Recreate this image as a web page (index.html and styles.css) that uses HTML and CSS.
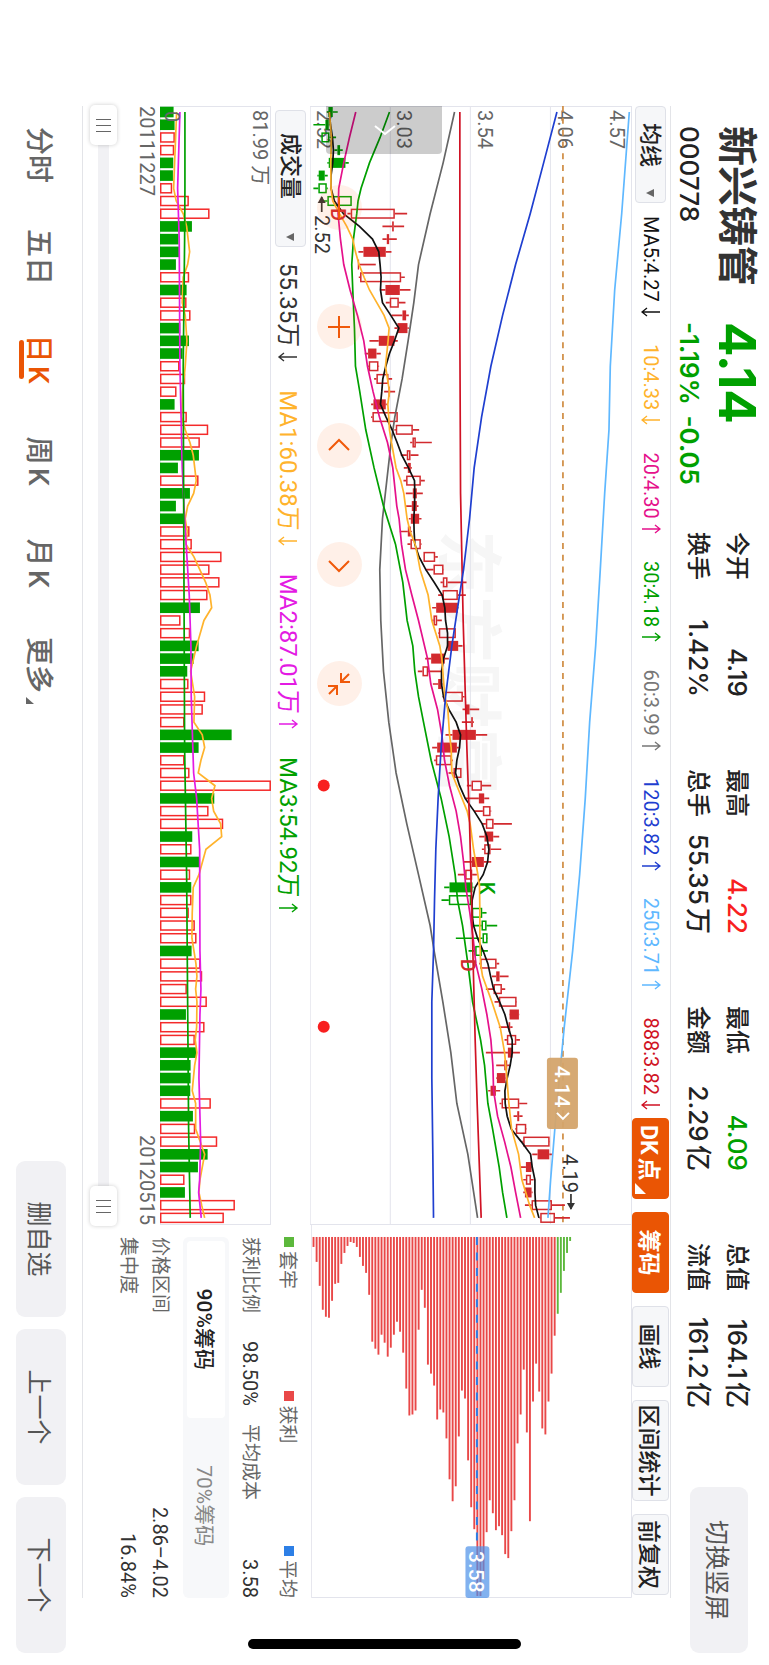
FILE: index.html
```html
<!DOCTYPE html>
<html lang="zh-CN">
<head>
    <meta charset="UTF-8">
    <meta name="viewport" content="width=device-width, initial-scale=1.0">
    <title>新兴铸管 000778</title>
    <link rel="stylesheet" href="styles.css">
</head>
<body>
  <div class="screen">
  <div class="app">

    <header class="header">
      <div class="quote">
        <h1 class="name">新兴铸管</h1>
        <span class="price">4.14</span>
        <span class="code">000778</span>
        <span class="change">-1.19% <span>-0.05</span></span>
      </div>
      <div class="stats">
        <dl>
          <dt>今开</dt><dd>4.19</dd>
          <dt>换手</dt><dd>1.42%</dd>
        </dl>
        <dl>
          <dt>最高</dt><dd class="up">4.22</dd>
          <dt>总手</dt><dd>55.35万</dd>
        </dl>
        <dl>
          <dt>最低</dt><dd class="down">4.09</dd>
          <dt>金额</dt><dd>2.29亿</dd>
        </dl>
        <dl>
          <dt>总值</dt><dd>164.1亿</dd>
          <dt>流值</dt><dd>161.2亿</dd>
        </dl>
      </div>
      <button class="btn switch" type="button">切换竖屏</button>
    </header>

    <main class="panel">
      <div class="toolbar">
        <span class="picker">
          <select aria-label="主图指标"><option>均线</option></select>
        </span>
        <div class="mas">
          <span class="c-black">MA5:4.27<svg class="arrow"><use href="#down"/></svg></span>
          <span class="c-yellow">10:4.33<svg class="arrow"><use href="#down"/></svg></span>
          <span class="c-pink">20:4.30<svg class="arrow"><use href="#up"/></svg></span>
          <span class="c-green">30:4.18<svg class="arrow"><use href="#up"/></svg></span>
          <span class="c-gray">60:3.99<svg class="arrow"><use href="#up"/></svg></span>
          <span class="c-blue">120:3.82<svg class="arrow"><use href="#up"/></svg></span>
          <span class="c-sky">250:3.71<svg class="arrow"><use href="#up"/></svg></span>
          <span class="c-red">888:3.82<svg class="arrow"><use href="#down"/></svg></span>
        </div>
        <div class="tools">
          <button class="tool on more" type="button">DK点</button>
          <button class="tool on" type="button">筹码</button>
          <button class="tool" type="button">画线</button>
          <button class="tool wide" type="button">区间统计</button>
          <button class="tool" type="button">前复权</button>
        </div>
      </div>

      <div class="kline">
        <svg id="kline" viewBox="0 0 1118 322"></svg>
        <button class="drawer" type="button" aria-label="展开">
          <svg viewBox="0 0 12 24"><path d="M2 2 L10 12 L2 22"/></svg>
        </button>
        <div class="zoom">
          <button type="button" aria-label="缩小"><svg viewBox="0 0 24 24"><path d="M1 12H23"/></svg></button>
          <button type="button" aria-label="放大"><svg viewBox="0 0 24 24"><path d="M1 12H23M12 1V23"/></svg></button>
          <button type="button" aria-label="左移"><svg viewBox="0 0 24 24"><path d="M16 2L6 12L16 22"/></svg></button>
          <button type="button" aria-label="右移"><svg viewBox="0 0 24 24"><path d="M8 2L18 12L8 22"/></svg></button>
          <button type="button" aria-label="收起"><svg viewBox="0 0 24 24"><path d="M1 10H10V1M10 10L2 2M23 14H14V23M14 14L22 22"/></svg></button>
        </div>
      </div>
      <div class="chips"><svg id="chips" viewBox="0 0 374 322"></svg></div>

      <div class="left">
        <div class="volbar">
          <span class="picker picker-vol">
            <select aria-label="副图指标"><option>成交量</option></select>
          </span>
          <span class="c-dark">55.35万<svg class="arrow big"><use href="#down"/></svg></span>
          <span class="c-yellow">MA1:60.38万<svg class="arrow big"><use href="#down"/></svg></span>
          <span class="c-violet">MA2:87.01万<svg class="arrow big"><use href="#up"/></svg></span>
          <span class="c-green">MA3:54.92万<svg class="arrow big"><use href="#up"/></svg></span>
        </div>
        <svg id="volume" class="volume" viewBox="0 0 1118 111"></svg>
        <div class="dates"><span>20111227</span><span>20120515</span></div>
        <div class="range">
          <input type="range" min="0" max="100" value="0" aria-label="开始日期">
          <input type="range" min="0" max="100" value="100" aria-label="结束日期">
        </div>
      </div>

      <div class="info">
        <div class="legend">
          <span class="k-green">套牢</span>
          <span class="k-red">获利</span>
          <span class="k-blue">平均</span>
        </div>
        <div class="line four">
          <span>获利比例</span><b>98.50%</b><span>平均成本</span><b>3.58</b>
        </div>
        <div class="seg">
          <button class="on" type="button">90%筹码</button>
          <button type="button">70%筹码</button>
        </div>
        <div class="line"><span>价格区间</span><b>2.86–4.02</b></div>
        <div class="line"><span>集中度</span><b>16.84%</b></div>
      </div>
    </main>

    <footer class="footer">
      <nav class="tabs">
        <button type="button">分时</button>
        <button type="button">五日</button>
        <button class="active" type="button">日K</button>
        <button type="button">周K</button>
        <button type="button">月K</button>
        <button class="dropdown" type="button">更多</button>
      </nav>
      <div class="actions">
        <button class="btn" type="button">删自选</button>
        <button class="btn" type="button">上一个</button>
        <button class="btn" type="button">下一个</button>
      </div>
    </footer>

    <div class="home"></div>
  </div>
  </div>

  <svg class="defs">
    <symbol id="down" viewBox="0 0 10 20"><path d="M5 1V19M1 14L5 19L9 14"/></symbol>
    <symbol id="up" viewBox="0 0 10 20"><path d="M5 19V1M1 6L5 1L9 6"/></symbol>
  </svg>

  <script src="chart.js"></script>
</body>
</html>
```

FILE: styles.css
```css
*{
  box-sizing: border-box;
}
body{
  margin: 0;
  background: #fff;
}
h1, dl, dd{
  margin: 0;
}
button, select, input{
  font-family: inherit;
  margin: 0;
  padding: 0;
  border: none;
  background: none;
}

/* 橫屏 */
.screen{
  position: relative;
  width: 100%;
  height: 100vh;
  overflow: hidden;
}
.app{
  position: absolute;
  left: 0;
  top: 0;
  width: 100vh;
  height: 100vw;
  display: flex;
  flex-direction: column;
  transform-origin: 0 0;
  transform: translateX(100vw) rotate(90deg);
  font-family: Roboto, "Noto Sans CJK SC", sans-serif;
  color: #222;
}
.defs{
  position: absolute;
  width: 0;
  height: 0;
}

.c-black{ color: #111; }
.c-dark{ color: #333; }
.c-yellow{ color: #ffb32c; }
.c-pink{ color: #e5118b; }
.c-green{ color: #00a000; }
.c-gray{ color: #777; }
.c-blue{ color: #1f3fd0; }
.c-sky{ color: #5fb8ff; }
.c-red{ color: #d01224; }
.c-violet{ color: #e31be3; }

.btn{
  width: 156px;
  height: 50px;
  border-radius: 9px;
  background: #f1f1f4;
  color: #555;
  font-size: 25px;
}

/* 頭部 */
.header{
  height: 98px;
  display: flex;
  align-items: flex-start;
  font-family: Inter, "Noto Sans CJK SC", sans-serif;
  text-autospace: normal;
}
.quote{
  width: 532px;
  padding: 8px 0 0 126px;
  display: grid;
  grid-template-columns: 196px 1fr;
  grid-template-rows: 48px 46px;
  line-height: 48px;
  white-space: nowrap;
}
.name{
  font-size: 40px;
  font-weight: 600;
  color: #333;
}
.price{
  font-size: 51px;
  font-weight: 700;
  color: #00a000;
}
.code, .change{
  font-size: 26px;
  font-weight: 500;
}
.change{
  font-weight: 600;
  color: #00a000;
}
.change span{
  margin-left: 4px;
}
.stats{
  display: flex;
  gap: 72px;
  padding-top: 12px;
}
.stats dl{
  width: 165px;
  display: grid;
  grid-template-columns: auto 1fr;
  font-size: 24px;
  line-height: 39px;
  font-weight: 500;
}
.stats dd{
  font-size: 26px;
  text-align: right;
}
.up{ color: #f81f1f; }
.down{ color: #00a000; }
.switch{
  width: 166px;
  height: 58px;
  margin: 21px 12px 0 auto;
}

/* 圖表 */
.panel{
  margin: 0 67px 0 106px;
  display: grid;
  grid-template-columns: 1119fr 373fr;
  border-top: 1px solid #e3e4e8;
  border-bottom: 1px solid #e3e4e8;
}
.toolbar{
  grid-column: 1 / 3;
  height: 38px;
  display: flex;
  align-items: center;
}
.picker{
  position: relative;
  width: 97px;
  height: 31px;
}
.picker select{
  appearance: none;
  width: 100%;
  height: 100%;
  padding-left: 16px;
  border: 1px solid #dfe1e8;
  border-radius: 4px;
  background: #f6f7f9;
  font-size: 22px;
  font-weight: 500;
  color: #222;
}
.picker::after{
  content: "";
  position: absolute;
  right: 6px;
  top: 12px;
  border: 4px solid transparent;
  border-top: 8px solid #666;
  border-bottom: none;
}
.picker-vol{
  width: 137px;
  margin: 0 -12px 0 4px;
}
.picker-vol select{
  padding-left: 22px;
}
.mas{
  flex: 1;
  padding: 0 8px 0 13px;
  display: flex;
  justify-content: space-between;
  font-size: 20px;
}
.arrow{
  width: 10px;
  height: 20px;
  margin-left: 5px;
  vertical-align: -3px;
  stroke: currentColor;
  fill: none;
  stroke-width: 1.4;
}
.arrow.big{
  height: 22px;
}
.tools{
  display: flex;
  gap: 13px;
  padding-right: 3px;
}
.tool{
  width: 81px;
  height: 37px;
  border: 1px solid #dfe1e8;
  border-radius: 4px;
  background: #f6f7f9;
  font-size: 23px;
  font-weight: 500;
  color: #222;
  position: relative;
  text-autospace: normal;
}
.tool.wide{
  width: 101px;
}
.tool.on{
  background: #ea5504;
  border-color: #ea5504;
  color: #fff;
  font-weight: 700;
}
.tool.more{
  text-align: left;
  padding-left: 6px;
}
.tool.more::after{
  content: "";
  position: absolute;
  right: 4px;
  bottom: 2px;
  border-left: 11px solid transparent;
  border-bottom: 11px solid #fff;
}

.kline{
  position: relative;
}
.kline > svg, .chips svg, .volume{
  display: block;
  width: 100%;
}
.drawer{
  position: absolute;
  left: 0;
  bottom: 16px;
  width: 48px;
  height: 116px;
  border-radius: 0 4px 4px 0;
  background: rgba(0, 0, 0, 0.2);
}
.drawer svg{
  width: 12px;
  height: 24px;
  stroke: #fff;
  stroke-width: 2;
  fill: none;
}
.zoom{
  position: absolute;
  left: 79px;
  bottom: 7px;
  display: flex;
  gap: 74px;
}
.zoom button{
  width: 45px;
  height: 45px;
  border-radius: 50%;
  background: rgba(255, 110, 30, 0.1);
  display: flex;
  align-items: center;
  justify-content: center;
}
.zoom svg{
  width: 24px;
  height: 24px;
  stroke: #f0590a;
  stroke-width: 2;
  fill: none;
}

.volbar{
  height: 39px;
  display: flex;
  align-items: center;
  gap: 28px;
  font-size: 24px;
}
.dates{
  display: flex;
  justify-content: space-between;
  font-size: 20px;
  line-height: 26px;
  color: #666;
}
.range{
  position: relative;
  height: 11px;
  margin: 25px 0 15px;
  background: #f1f1f4;
}
.range input{
  appearance: none;
  position: absolute;
  left: -1px;
  top: -8px;
  width: calc(100% + 2px);
  height: 27px;
  pointer-events: none;
}
.range input::-webkit-slider-thumb{
  appearance: none;
  pointer-events: auto;
  width: 40px;
  height: 27px;
  border-radius: 5px;
  box-shadow: 0 0 4px rgba(0, 0, 0, 0.2);
  background:
    linear-gradient(#666, #666) 14px 6px / 1px 15px no-repeat,
    linear-gradient(#666, #666) 20px 6px / 1px 15px no-repeat,
    linear-gradient(#666, #666) 26px 6px / 1px 15px no-repeat,
    #fff;
}

/* 籌碼 */
.info{
  padding: 6px 0 0 12px;
  font-size: 19px;
  color: #666;
}
.legend{
  height: 28px;
  margin-bottom: 5px;
  display: flex;
  justify-content: space-between;
  align-items: center;
}
.legend span::before{
  content: "";
  display: inline-block;
  width: 10px;
  height: 10px;
  margin-right: 4px;
  vertical-align: 3px;
  background: #e94848;
}
.legend .k-green::before{ background: #5cb83c; }
.legend .k-blue::before{ background: #2d7fe6; }
.line{
  display: flex;
  justify-content: space-between;
  line-height: 32px;
}
.line b{
  font-size: 20px;
  font-weight: 400;
  color: #333;
}
.four{
  line-height: 42px;
  display: grid;
  grid-template-columns: 104px 83px 1fr auto;
}
.seg{
  display: flex;
  height: 46px;
  margin-bottom: 7px;
  padding: 4px;
  border-radius: 6px;
  background: #f7f8fa;
}
.seg button{
  flex: 1;
  border-radius: 4px;
  font-size: 21px;
  color: #888;
}
.seg .on{
  background: #fff;
  color: #222;
  font-weight: 500;
}

/* 底部 */
.footer{
  flex: 1;
  display: flex;
  align-items: center;
  justify-content: space-between;
  padding: 0 12px 0 104px;
}
.tabs, .actions{
  display: flex;
}
.actions{
  gap: 12px;
}
.tabs button{
  position: relative;
  width: 102px;
  height: 46px;
  font-size: 28px;
  font-weight: 500;
  color: #666;
  text-autospace: normal;
}
.tabs .active{
  color: #ea5504;
}
.tabs .active::after{
  content: "";
  position: absolute;
  left: 32px;
  bottom: 1px;
  width: 39px;
  height: 5px;
  border-radius: 3px;
  background: #ea5504;
}
.tabs .dropdown::after{
  content: "";
  position: absolute;
  right: 12px;
  bottom: 8px;
  border-left: 7px solid transparent;
  border-bottom: 8px solid #666;
}

.home{
  position: absolute;
  right: 16px;
  top: 248px;
  width: 10px;
  height: 273px;
  border-radius: 5px;
  background: #000;
}

/* svg */
svg text{
  font-family: Roboto, "Noto Sans CJK SC", sans-serif;
  font-size: 20px;
  fill: #666;
}
.grid{
  stroke: #e3e4ec;
  fill: none;
}
svg .watermark{
  font-size: 66px;
  font-weight: 700;
  fill: #f6f6f6;
}
svg .mark{
  fill: #333;
}
svg .white{
  fill: #fff;
  font-size: 21px;
  font-weight: 500;
}
svg .dk{
  font-weight: 500;
}
```

FILE: chart.js
```javascript
const RED = '#d22a2e'
const GREEN = '#00a000'
const STEP = 12.7

// 顏色/類型, 最低, 實體下, 實體上, 最高  (r/g = 實心, R/G = 空心)
const candles = `g,80,85,98,113 g,40,76,86,88 G,62,64,88,108 g,103,112,120,128 g,82,86,136,146 g,52,56,74,83 G,40,55,80,83 G,60,82,155,155
R,142,152,284,321 r,247,276,281,312 r,247,260,267,290 r,175,190,257,274 r,173,173,177,227 R,176,180,303,314 r,240,256,299,331 R,257,269,296,316
r,274,307,318,326 r,283,292,322,326 r,208,236,283,293 r,194,204,229,242 R,203,206,235,237 R,222,229,265,276 r,252,265,269,285 r,213,220,257,260
R,213,217,293,293 R,283,287,338,357 R,330,337,347,395 R,302,320,331,355 r,311,323,332,335 R,310,318,362,374 r,317,338,350,368 r,318,335,350,355
r,326,332,357,364 r,299,323,332,335 R,322,331,362,364 R,370,370,405,413 R,376,400,430,431 R,421,428,442,499 R,414,427,473,497 r,396,408,473,475
R,396,400,411,425 R,414,416,467,467 r,440,442,474,487 r,375,393,434,446 R,353,367,384,425 r,398,414,424,427 R,427,430,488,493 r,487,495,508,537
r,485,513,518,521 r,436,457,527,561 r,396,411,470,476 R,402,407,455,458 R,445,460,484,484 R,500,514,545,573 r,495,536,552,567 R,522,548,571,573
R,545,557,580,635 r,537,553,579,597 R,545,552,571,603 r,490,515,551,573 R,473,495,516,530 g,432,448,517,520 G,424,446,513,517 G,515,515,546,559
G,520,544,559,591 G,467,547,562,563 G,505,525,545,563 R,537,540,589,597 r,575,588,598,625 R,557,580,605,615 R,583,596,649,650 r,627,628,656,657
r,596,625,630,637 R,613,620,648,659 r,557,623,637,659 r,588,612,621,629 r,588,590,616,617 r,564,571,587,600 R,598,604,657,681 r,640,651,657,667
R,645,647,678,679 R,666,669,748,749 r,696,712,747,755 r,662,677,694,697 R,669,677,692,700 r,669,674,694,697 R,674,694,755,794 R,718,720,764,809`
  .split(/\s+/).map(s => s.split(','))

// [第幾根, 值]
const lines = [
  ['#666', '0,463 4,429 8,390 12,355 15,341 18,324 21,306 24,284 26,273 29,260 32,247 36,239 40,242 44,250 48,266 52,288 56,320 60,355 64,390 66,402 70,428 74,452 78,470 82,503 87,532'],
  ['#00a000', '0,268 2,240 4,208 6,183 7,174 8,170 10,160 12,155 14,158 17,163 20,166 22,179 25,197 28,222 31,250 34,286 37,308 40,321 42,338 44,344 46,355 48,370 51,393 54,423 57,447 60,465 62,472 64,487 67,503 70,517 73,541 75,553 78,563 80,577 83,597 85,607 87,620'],
  ['#e5118b', '0,167 2,148 4,131 6,116 8,114 10,121 12,131 14,150 16,172 18,191 20,202 22,219 24,238 26,262 28,278 31,290 32,297 34,304 36,316 38,335 40,355 43,382 45,392 47,412 49,425 51,433 53,448 55,468 57,481 59,490 61,497 63,509 65,519 67,527 69,545 71,560 73,572 75,578 77,580 79,592 81,613 83,632 85,646 87,661'],
  ['#111', '0,88 1,91 2,97 3,100 4,98 5,93 6,93 7,103 8,130 9,178 10,217 11,236 12,240 13,243 14,241 15,247 16,272 17,296 18,283 19,268 20,257 21,248 22,245 23,241 24,258 25,276 26,291 27,305 28,325 29,343 30,344 31,343 32,341 33,342 34,344 35,357 36,377 37,402 38,426 39,434 40,436 41,442 42,442 43,430 44,424 45,424 46,430 47,446 48,468 49,481 50,478 51,470 52,466 53,478 54,495 55,522 56,546 57,560 58,566 59,562 60,549 61,525 62,516 63,515 64,520 65,532 66,549 67,563 68,571 69,580 70,598 71,614 72,624 73,636 74,636 75,630 76,621 77,614 78,615 79,621 80,633 81,663 82,691 83,696 84,704 85,704 86,706 87,716'],
  ['#ffb32c', '0,88 2,94 4,92 6,93 7,98 8,118 9,140 10,158 11,166 12,177 13,192 14,208 15,230 16,252 17,267 18,264 20,256 21,262 22,268 23,263 24,266 25,268 26,274 28,288 29,302 30,311 32,321 33,330 34,345 35,353 36,360 38,384 40,395 42,419 43,425 44,428 46,434 47,443 49,448 50,453 52,455 53,470 55,501 56,510 58,520 60,533 61,538 63,539 65,539 67,541 68,547 70,575 72,600 74,613 76,620 78,626 80,634 82,655 84,665 86,688 87,703'],
  ['#d01224', '0,479 17,479 30,481 40,489 50,500 56,508 62,514 67,519 73,525 78,531 87,543'],
  ['#1f3fd0', '0,770 4,730 8,690 12,646 16,607 20,572 24,544 28,522 32,508 36,490 38,478 42,455 46,436 50,423 54,414 58,407 62,403 66,400 70,395 76,395 82,398 87,400'],
  ['#5fb8ff', '0,987 8,964 14,943 20,930 25,926 30,913 36,900 42,886 48,868 54,855 60,838 66,817 72,792 78,770 84,751 87,743']
]

const volumes = `g521 g524 r525 r523 g520 g519 r517 r567 r629 g576 g536 g537 g528 r568 g560 r560 r572 g541 g567 g548 r539 r556
r530 g524 r561 r625 r600 g597 g534 r596 g570 g528 g551 r569 r576 r665 r629 r659 r623 g600 r542 r571 g596 g581
g562 r566 r616 r609 r554 g695 g596 r554 r569 r813 g643 r626 r670 g577 r575 g599 r571 g574 r575 r567 r585 r590
g575 r602 r607 r561 r621 g558 r614 r585 g590 g572 g572 g571 r633 g579 r586 r652 g623 g594 r554 g555 r705 r672`.split(/\s+/)

const volLines = [
  ['#ffb32c', '0,530 2,527 4,524 6,521 7,529 8,550 9,560 11,569 12,563 13,550 15,547 16,556 18,561 20,556 22,548 24,545 25,556 26,570 27,580 29,589 30,581 31,563 32,556 33,562 34,558 35,582 37,617 38,630 39,635 40,612 42,590 44,572 46,584 48,582 49,607 50,614 51,603 52,595 53,645 54,635 55,641 56,662 57,665 58,618 60,597 61,580 63,577 65,576 67,588 68,591 69,587 70,591 72,590 73,586 74,591 75,584 77,577 78,587 80,587 82,614 84,600 85,597 86,605 87,614'],
  ['#e31be3', '0,540 6,533 10,538 20,540 28,547 32,554 38,568 42,573 46,574 52,581 54,590 58,599 66,600 69,603 71,600 76,597 81,602 84,599 85,596 87,604'],
  ['#00a000', '0,555 6,555 10,554 20,550 30,551 50,554 60,560 70,563 80,566 87,571']
]

const chips = [10, 25, 49, 73, 80, 81, 64, 47, 46, 27, 16, 9, 5, 6, 10, 20, 29, 36, 58, 105, 112, 118, 98, 106, 120, 111, 98, 85,
  95, 116, 152, 179, 178, 174, 93, 53, 71, 128, 137, 149, 183, 173, 176, 202, 243, 265, 250, 200, 154, 162, 224, 271, 293, 360,
  360, 343, 296, 264, 277, 294, 290, 299, 318, 322, 295, 264, 207, 178, 133, 196, 285, 165, 127, 155, 192, 198, 165, 137, 99,
  77, 56, 34, 16, 4]

const x = i => 6 + i * STEP
const y = v => (995 - v) / 3
const vy = v => (813 - v) / 3
const line = (color, data, fy) => {
  const points = data.split(' ').map(p => p.split(',')).map(p => x(p[0]).toFixed(1) + ',' + fy(p[1]).toFixed(1))
  return `<polyline points="${points.join(' ')}" fill="none" stroke="${color}" stroke-width="1.7"/>`
}

// K線
let html = '<text class="watermark" x="424" y="187">东方财富</text>'
html += '<path class="grid" d="M0.5 0V322M1117.5 0V322M0 0.5H1118M0 81.5H1118M0 161.5H1118M0 241.5H1118M0 321.5H1118"/>'
html += '<text x="4" y="22">4.57</text><text x="4" y="74">4.06</text><text x="4" y="154">3.54</text><text x="4" y="235">3.03</text><text x="4" y="315">2.52</text>'
html += '<path d="M0 69H1118" stroke="#cf8c42" stroke-width="1.7" stroke-dasharray="6 5.8"/>'
candles.forEach((c, i) => {
  const [type, low, bottom, top, high] = c
  const color = type.toLowerCase() === 'r' ? RED : GREEN
  const hollow = type < 'a'
  const h = (top - bottom) / 3
  html += `<path d="M${x(i)} ${y(low)}V${y(bottom)}M${x(i)} ${y(top)}V${y(high)}" stroke="${color}" stroke-width="1.7"/>`
  html += hollow
    ? `<rect x="${x(i) - 4.3}" y="${y(top) + 0.7}" width="8.6" height="${Math.max(h - 1.4, 1)}" fill="none" stroke="${color}" stroke-width="1.5"/>`
    : `<rect x="${x(i) - 5}" y="${y(top)}" width="10" height="${h}" fill="${color}"/>`
})
lines.forEach(l => html += line(l[0], l[1], y))
html += `<text class="dk" x="102" y="301" style="fill:${RED}">D</text>`
html += `<text class="dk" x="775" y="152" style="fill:${GREEN}">K</text>`
html += `<text class="dk" x="852" y="171" style="fill:${RED}">D</text>`
html += '<circle cx="679" cy="308" r="6" fill="#f81f1f"/><circle cx="920" cy="308" r="6" fill="#f81f1f"/>'
html += '<path d="M91 310H106" stroke="#333" stroke-width="1.7"/><path d="M90 310L97 306V314Z" fill="#333"/><text class="mark" x="109" y="317">2.52</text>'
html += '<text class="mark" x="1047" y="69">4.19</text><path d="M1087 61H1102" stroke="#333" stroke-width="1.7"/><path d="M1103 61L1096 57V65Z" fill="#333"/>'
html += '<rect x="951" y="54" width="71" height="31" rx="3" fill="#d4a46c" fill-opacity="0.95"/><text class="white" x="959" y="77">4.14</text>'
html += '<path d="M1006 63L1012 69L1006 75" fill="none" stroke="#fff" stroke-width="2"/>'
document.getElementById('kline').innerHTML = html

// 籌碼分佈
html = '<path class="grid" d="M0 0.5H373.5V321.5H0"/>'
chips.forEach((n, i) => {
  html += `<rect x="12" y="${(318.4 - i * 3.1).toFixed(1)}" width="${n}" height="1.9" fill="${i < 79 ? '#e94848' : '#5cb83c'}"/>`
})
html += '<path d="M12 155.5H322" stroke="#2d7fe6" stroke-width="2" stroke-dasharray="8 7.6"/>'
html += '<rect x="322" y="143" width="52" height="24" rx="3" fill="#4c90e8" fill-opacity="0.7"/><text class="white" x="327" y="163">3.58</text>'
document.getElementById('chips').innerHTML = html

// 成交量
html = '<path class="grid" d="M0.5 111V0.5H1117.5V110.5H0"/>'
html += '<text x="4" y="18">81.99 万</text>'
volumes.forEach((v, i) => {
  const top = vy(v.slice(1))
  html += v[0] === 'r'
    ? `<rect x="${x(i) - 4.5}" y="${top + 0.8}" width="9" height="${109.4 - top}" fill="none" stroke="#f42a2a" stroke-width="1.5"/>`
    : `<rect x="${x(i) - 5.3}" y="${top}" width="10.6" height="${111 - top}" fill="${GREEN}"/>`
})
volLines.forEach(l => html += line(l[0], l[1], vy))
html += '<text x="5" y="106">0</text>'
document.getElementById('volume').innerHTML = html
```
